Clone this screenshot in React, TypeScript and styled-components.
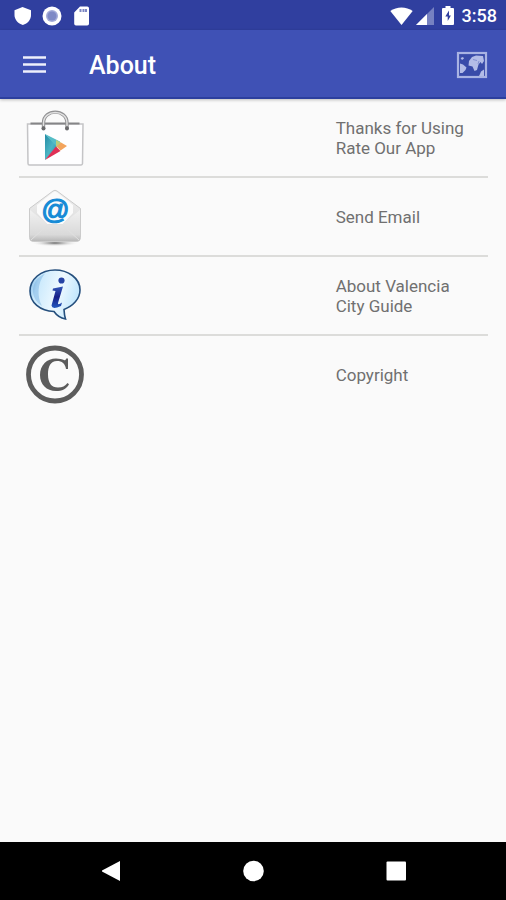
import React from 'react';
import styled, { createGlobalStyle } from 'styled-components';

const GlobalStyle = createGlobalStyle`
  * {
    box-sizing: border-box;
  }
  body {
    margin: 0;
    background: #fafafa;
    font-family: Roboto, 'Liberation Sans', sans-serif;
  }
`;

const Screen = styled.div`
  display: flex;
  flex-direction: column;
  min-height: 100vh;
`;

const StatusBar = styled.div`
  display: flex;
  align-items: center;
  justify-content: space-between;
  height: 30px;
  padding: 1px 9px 0 12px;
  background: #303f9f;
  color: #fff;
`;

const StatusGroup = styled.div<{ $gap: number }>`
  display: flex;
  align-items: center;
  gap: ${({ $gap }) => $gap}px;

  svg {
    display: block;
  }
`;

const Clock = styled.time`
  margin-left: 4px;
  font-size: 18px;
  font-weight: 500;
  line-height: 20px;
`;

const AppBar = styled.header`
  display: flex;
  align-items: center;
  height: 69px;
  padding: 2px 18px 0 20px;
  background: #3f51b5;
  border-bottom: 2px solid #2c3f9e;
  box-shadow: 0 1px 3px rgba(0, 0, 0, 0.25);
  color: #fff;
`;

const BarButton = styled.button`
  display: flex;
  align-items: center;
  justify-content: center;
  padding: 0;
  border: 0;
  background: none;
  color: inherit;
  cursor: pointer;
`;

const Title = styled.h1`
  flex: 1;
  margin: 0 0 0 39px;
  padding-top: 2px;
  font-size: 25px;
  font-weight: 500;
  line-height: 32px;
`;

const List = styled.ul`
  flex: 1;
  margin: 0;
  padding: 0 18px 0 19px;
  list-style: none;
`;

const Item = styled.li`
  & + & {
    border-top: 2px solid #dcdcda;
  }
`;

const Row = styled.button`
  display: grid;
  grid-template-columns: 2fr 1fr;
  align-items: center;
  width: 100%;
  min-height: 77px;
  padding: 8px 0;
  border: 0;
  background: none;
  color: #707070;
  font: 400 17px/20px Roboto, 'Liberation Sans', sans-serif;
  text-align: left;
  cursor: pointer;
`;

const RowIcon = styled.span`
  padding-left: 6px;

  svg {
    display: block;
  }
`;

const RowText = styled.span`
  padding-left: 4px;
  white-space: pre-line;
`;

const NavBar = styled.nav`
  display: flex;
  align-items: center;
  justify-content: space-around;
  height: 58px;
  padding: 0 39px;
  background: #000;
  color: #fff;
`;

const NavButton = styled(BarButton)`
  width: 48px;
  height: 48px;
`;

const ShieldIcon = () => (
  <svg width="20" height="20" viewBox="0 0 20 20" aria-hidden="true">
    <path d="M10.500 1 19 4.300V9c0 4.600-3.200 8.500-8.200 10C6 17.500 2.500 13.600 2.500 9V4.300Z" fill="#fff" />
  </svg>
);

const RecordIcon = () => (
  <svg width="20" height="20" viewBox="0 0 20 20" aria-hidden="true">
    <circle cx="10" cy="10" r="9.500" fill="#fff" />
    <circle cx="10" cy="10" r="6" fill="#a3abd8" />
    <circle cx="10" cy="10" r="4.500" fill="#7f8ac6" />
  </svg>
);

const SdCardIcon = () => (
  <svg width="18" height="20" viewBox="0 0 18 20" aria-hidden="true">
    <path d="M8 .5h7.200A1.800 1.800 0 0 1 17 2.300v15.500a1.800 1.800 0 0 1-1.800 1.800H4a1.800 1.800 0 0 1-1.800-1.800V6.500Z" fill="#fff" />
    <path d="M7.500 3h2v3h-2ZM10.500 3h2v3h-2ZM13 3h2v3h-2Z" fill="#7d87c3" />
  </svg>
);

const WifiIcon = () => (
  <svg width="23" height="18" viewBox="0 0 23 18" aria-hidden="true">
    <path d="M.3 4C6.500-.8 16.500-.8 22.700 4L11.500 18Z" fill="#fff" />
  </svg>
);

const SignalIcon = () => (
  <svg width="18" height="18" viewBox="0 0 18 18" aria-hidden="true">
    <path d="M0 18 18 0v18Z" fill="#7681c1" />
    <path d="M0 18 11 7v11Z" fill="#fff" />
  </svg>
);

const BatteryIcon = () => (
  <svg width="12" height="19" viewBox="0 0 12 19" aria-hidden="true">
    <path d="M3.500 0h5v2H11a1 1 0 0 1 1 1v15a1 1 0 0 1-1 1H1a1 1 0 0 1-1-1V3a1 1 0 0 1 1-1h2.500Z" fill="#fff" />
    <path d="M7 4.500 3.300 10.500h2.400v4.500L8.900 9.500H7Z" fill="#303f9f" />
  </svg>
);

const MenuIcon = () => (
  <svg width="30" height="24" viewBox="0 0 30 24" aria-hidden="true">
    <path d="M3 4.500h23M3 11.500h23M3 18.500h23" stroke="#eef0fb" strokeWidth="2.600" />
  </svg>
);

const MapIcon = () => (
  <svg width="32" height="28" viewBox="0 0 32 28" aria-hidden="true">
    <rect x="2" y="2" width="28" height="24" fill="#394ba9" stroke="#a9b3e3" strokeWidth="2.200" />
    <path
      d="M4.500 7l2.500-1 1 1.500L6 9ZM4 12.500l3 1 3.500 3-1 2.500-3 3L4 22ZM13 10l3-4 4-1.500 7 .5 1 5-2 3-1.500-2-2 2.500-1.500 5.500-2.500 1-2-4.500-4-1ZM25 20.500l3-2v6.500h-5l1-2Z"
      fill="#b3bce7"
    />
    <path d="M17 8.500l4 1M22 13l1-3" stroke="#8490d2" strokeWidth="1" />
  </svg>
);

const StoreIcon = () => (
  <svg width="60" height="60" viewBox="0 0 60 60" aria-hidden="true">
    <defs>
      <linearGradient id="playBlue" x1="0" y1="0" x2="1" y2="1">
        <stop offset="0" stopColor="#238aa4" />
        <stop offset=".5" stopColor="#4cb5c4" />
        <stop offset="1" stopColor="#287e9f" />
      </linearGradient>
    </defs>
    <path d="M2.500 16h55.500l-.5 39.500a1.500 1.500 0 0 1-1.500 1.500H4.500A1.500 1.500 0 0 1 3 55.500Z" fill="#fefeff" stroke="#c4c4c6" strokeWidth="1.500" />
    <path d="M5.500 15.500h49" stroke="#858588" strokeWidth="2.200" />
    <path d="M18.500 21V15C18.500 .5 42 .5 42 15v6" fill="none" stroke="#929294" strokeWidth="3.400" />
    <path d="M18.500 18V15C18.500 1 42 1 42 15v3" fill="none" stroke="#e2e2e2" strokeWidth="1.400" />
    <circle cx="18.500" cy="20.500" r="2" fill="#6a6a6c" />
    <circle cx="42" cy="20.500" r="2" fill="#6a6a6c" />
    <path d="M20 26v26L33 38Z" fill="url(#playBlue)" />
    <path d="M20 26 35 33.500 32 39Z" fill="#55bdc6" />
    <path d="M20 52 35.500 43l-4.500-4.500Z" fill="#df2f55" />
    <path d="M31 32 36 34.500 34 39.500 31 38.500Z" fill="#b9cd7b" />
    <path d="M36 34.500 42 38 35.500 42.500 31.500 38.500Z" fill="#f3a45c" />
  </svg>
);

const EmailIcon = () => (
  <svg width="60" height="60" viewBox="0 0 60 60" aria-hidden="true">
    <defs>
      <linearGradient id="envelope" x1="0" y1="0" x2="0" y2="1">
        <stop offset="0" stopColor="#f1f1f1" />
        <stop offset=".8" stopColor="#d9d9d9" />
        <stop offset="1" stopColor="#b8b8b8" />
      </linearGradient>
      <radialGradient id="envelopeShadow">
        <stop offset="0" stopColor="#666" />
        <stop offset="1" stopColor="#fafafa" stopOpacity="0" />
      </radialGradient>
    </defs>
    <ellipse cx="30" cy="56" rx="24" ry="3.500" fill="url(#envelopeShadow)" />
    <path d="M4.500 21.500 28 4q2-1.500 4 0l23.500 17.500v29q0 4-4 4H8.500q-4 0-4-4Z" fill="url(#envelope)" stroke="#cbcbcb" />
    <path d="M12 18 28 5.500q2-1.500 4 0L48 18v8L37 38H23L12 26Z" fill="#fbfbfb" />
    <path d="M5 23 23 37.500h14L55 23v28q0 3-4 3H9q-4 0-4-3Z" fill="url(#envelope)" />
    <path d="M6 53 23 37.500h14L54 53" fill="none" stroke="#e0e0e0" strokeWidth="1" />
    <text x="30" y="32" fill="#168bd6" stroke="#168bd6" strokeWidth="1.200" fontFamily="'Liberation Sans', sans-serif" fontSize="28" fontStyle="italic" textAnchor="middle">@</text>
  </svg>
);

const InfoIcon = () => (
  <svg width="60" height="60" viewBox="0 0 60 60" aria-hidden="true">
    <defs>
      <linearGradient id="bubble" x1="0" y1="0" x2="1" y2="0.300">
        <stop offset="0" stopColor="#69a9dd" />
        <stop offset=".22" stopColor="#cae9fc" />
        <stop offset=".65" stopColor="#eef9ff" />
        <stop offset="1" stopColor="#c5e8fd" />
      </linearGradient>
      <linearGradient id="letter" x1="0" y1="0" x2="0" y2="1">
        <stop offset="0" stopColor="#3157b7" />
        <stop offset=".5" stopColor="#171f88" />
        <stop offset="1" stopColor="#245abf" />
      </linearGradient>
    </defs>
    <path
      d="M30 4C43 4 55 12 55 24c0 9-7 16-16 19.500.2 3.500.5 6.500 1.500 9.500-5-1-9-3.800-11.500-7.500C15 45 5 36.500 5 25 5 13 16 4 30 4Z"
      fill="url(#bubble)"
      stroke="#254f7d"
      strokeWidth="1.600"
    />
    <path d="M20 7.500C12 11 7.500 18 8 26c.5 6 4 11 9 14-5-9-5-23 3-32.500Z" fill="#5b9dd6" opacity=".35" />
    <circle cx="36.500" cy="14.500" r="3.100" fill="#2644a5" />
    <path d="M28 22.500 38 20.500 33 37q-.5 2 2.500.5l1.500-1-1 3.500q-9 4-9.500-.5L30.500 25 27.500 24.500Z" fill="url(#letter)" />
  </svg>
);

const CopyrightIcon = () => (
  <svg width="60" height="60" viewBox="0 0 60 60" aria-hidden="true">
    <circle cx="30" cy="29.500" r="26.500" fill="none" stroke="#5c5c5c" strokeWidth="4.800" />
    <path
      d="M43 13.500v10.500h-2C40 18.500 37 16 32 16c-6.500 0-9 5.500-9 13.500 0 8.500 3.500 13 10 13 4.500 0 7-1.500 9.500-4.500l1.500 1.200C41.500 44 37 46 31 46c-9.500 0-16-6.500-16-16 0-10 7-16.500 16-16.500 3.500 0 6 .8 8.500 1.800 1 0 1.300-.6 1.700-1.800Z"
      fill="#5c5c5c"
    />
  </svg>
);

const entries = [
  { text: 'Thanks for Using\nRate Our App', Icon: StoreIcon },
  { text: 'Send Email', Icon: EmailIcon },
  { text: 'About Valencia\nCity Guide', Icon: InfoIcon },
  { text: 'Copyright', Icon: CopyrightIcon },
];

export default function App() {
  return (
    <Screen>
      <GlobalStyle />
      <StatusBar>
        <StatusGroup $gap={10}>
          <ShieldIcon />
          <RecordIcon />
          <SdCardIcon />
        </StatusGroup>
        <StatusGroup $gap={8}>
          <StatusGroup $gap={3}>
            <WifiIcon />
            <SignalIcon />
          </StatusGroup>
          <StatusGroup $gap={4}>
            <BatteryIcon />
            <Clock>3:58</Clock>
          </StatusGroup>
        </StatusGroup>
      </StatusBar>
      <AppBar>
        <BarButton type="button" aria-label="Open menu">
          <MenuIcon />
        </BarButton>
        <Title>About</Title>
        <BarButton type="button" aria-label="Map">
          <MapIcon />
        </BarButton>
      </AppBar>
      <List>
        {entries.map(({ text, Icon }) => (
          <Item key={text}>
            <Row type="button">
              <RowIcon>
                <Icon />
              </RowIcon>
              <RowText>{text}</RowText>
            </Row>
          </Item>
        ))}
      </List>
      <NavBar>
        <NavButton type="button" aria-label="Back">
          <svg width="22" height="22" viewBox="0 0 22 22" aria-hidden="true">
            <path d="M21 1v20L3 11.500v-1Z" fill="#fff" />
          </svg>
        </NavButton>
        <NavButton type="button" aria-label="Home">
          <svg width="22" height="22" viewBox="0 0 22 22" aria-hidden="true">
            <circle cx="11.500" cy="11" r="10.300" fill="#fff" />
          </svg>
        </NavButton>
        <NavButton type="button" aria-label="Recent apps">
          <svg width="22" height="22" viewBox="0 0 22 22" aria-hidden="true">
            <rect x="1.500" y="1.500" width="19.500" height="19" rx="1" fill="#fff" />
          </svg>
        </NavButton>
      </NavBar>
    </Screen>
  );
}
